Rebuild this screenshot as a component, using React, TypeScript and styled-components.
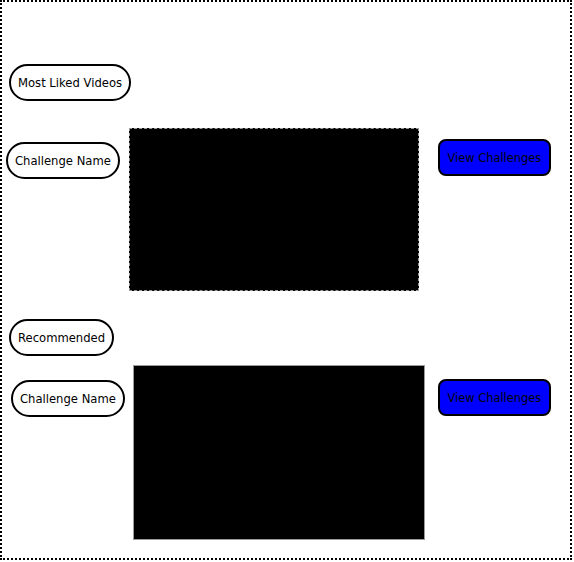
import styled, { createGlobalStyle } from "styled-components";

const GlobalStyle = createGlobalStyle`
  body {
    margin: 0;
    background: #fff;
    font-family: "DejaVu Sans", Verdana, sans-serif;
  }
`;

const Frame = styled.div`
  box-sizing: border-box;
  width: 572px;
  height: 560px;
  border: 2px dotted #000;
  display: flex;
  flex-direction: column;
  padding-top: 62px;
`;

const Section = styled.section<{ $gap: number }>`
  display: flex;
  flex-direction: column;
  align-items: flex-start;
  margin-bottom: ${(p) => p.$gap}px;
`;

const Pill = styled.div<{ $left: number; $top?: number }>`
  box-sizing: border-box;
  height: 37px;
  margin-left: ${(p) => p.$left}px;
  margin-top: ${(p) => p.$top ?? 0}px;
  padding: 0 7px;
  border: 2px solid #000;
  border-radius: 20px;
  display: flex;
  align-items: center;
  font-size: 11.6px;
  color: #000;
  white-space: nowrap;
`;

const Row = styled.div<{ $top: number }>`
  display: flex;
  align-items: flex-start;
  margin-top: ${(p) => p.$top}px;
`;

const Video = styled.div<{ $w: number; $h: number; $left: number; $dashed?: boolean }>`
  box-sizing: border-box;
  width: ${(p) => p.$w}px;
  height: ${(p) => p.$h}px;
  margin-left: ${(p) => p.$left}px;
  background: #000;
  border: 1px ${(p) => (p.$dashed ? "dashed" : "solid")} #9a9a9a;
`;

const ViewButton = styled.button<{ $left: number; $top: number }>`
  box-sizing: border-box;
  width: 113px;
  height: 37px;
  margin-left: ${(p) => p.$left}px;
  margin-top: ${(p) => p.$top}px;
  padding: 0;
  background: #0000ff;
  border: 2px solid #000;
  border-radius: 8px;
  color: #000;
  font-family: "DejaVu Sans", Verdana, sans-serif;
  font-size: 11.4px;
  white-space: nowrap;
`;

export default function App() {
  return (
    <>
      <GlobalStyle />
      <Frame>
        <Section $gap={28}>
          <Pill $left={7}>Most Liked Videos</Pill>
          <Row $top={27}>
            <Pill $left={4} $top={14}>Challenge Name</Pill>
            <Video $w={290} $h={163} $left={9} $dashed />
            <ViewButton $left={19} $top={11}>View Challenges</ViewButton>
          </Row>
        </Section>
        <Section $gap={0}>
          <Pill $left={7}>Recommended</Pill>
          <Row $top={9}>
            <Pill $left={9} $top={15}>Challenge Name</Pill>
            <Video $w={292} $h={175} $left={8} />
            <ViewButton $left={13} $top={14}>View Challenges</ViewButton>
          </Row>
        </Section>
      </Frame>
    </>
  );
}
